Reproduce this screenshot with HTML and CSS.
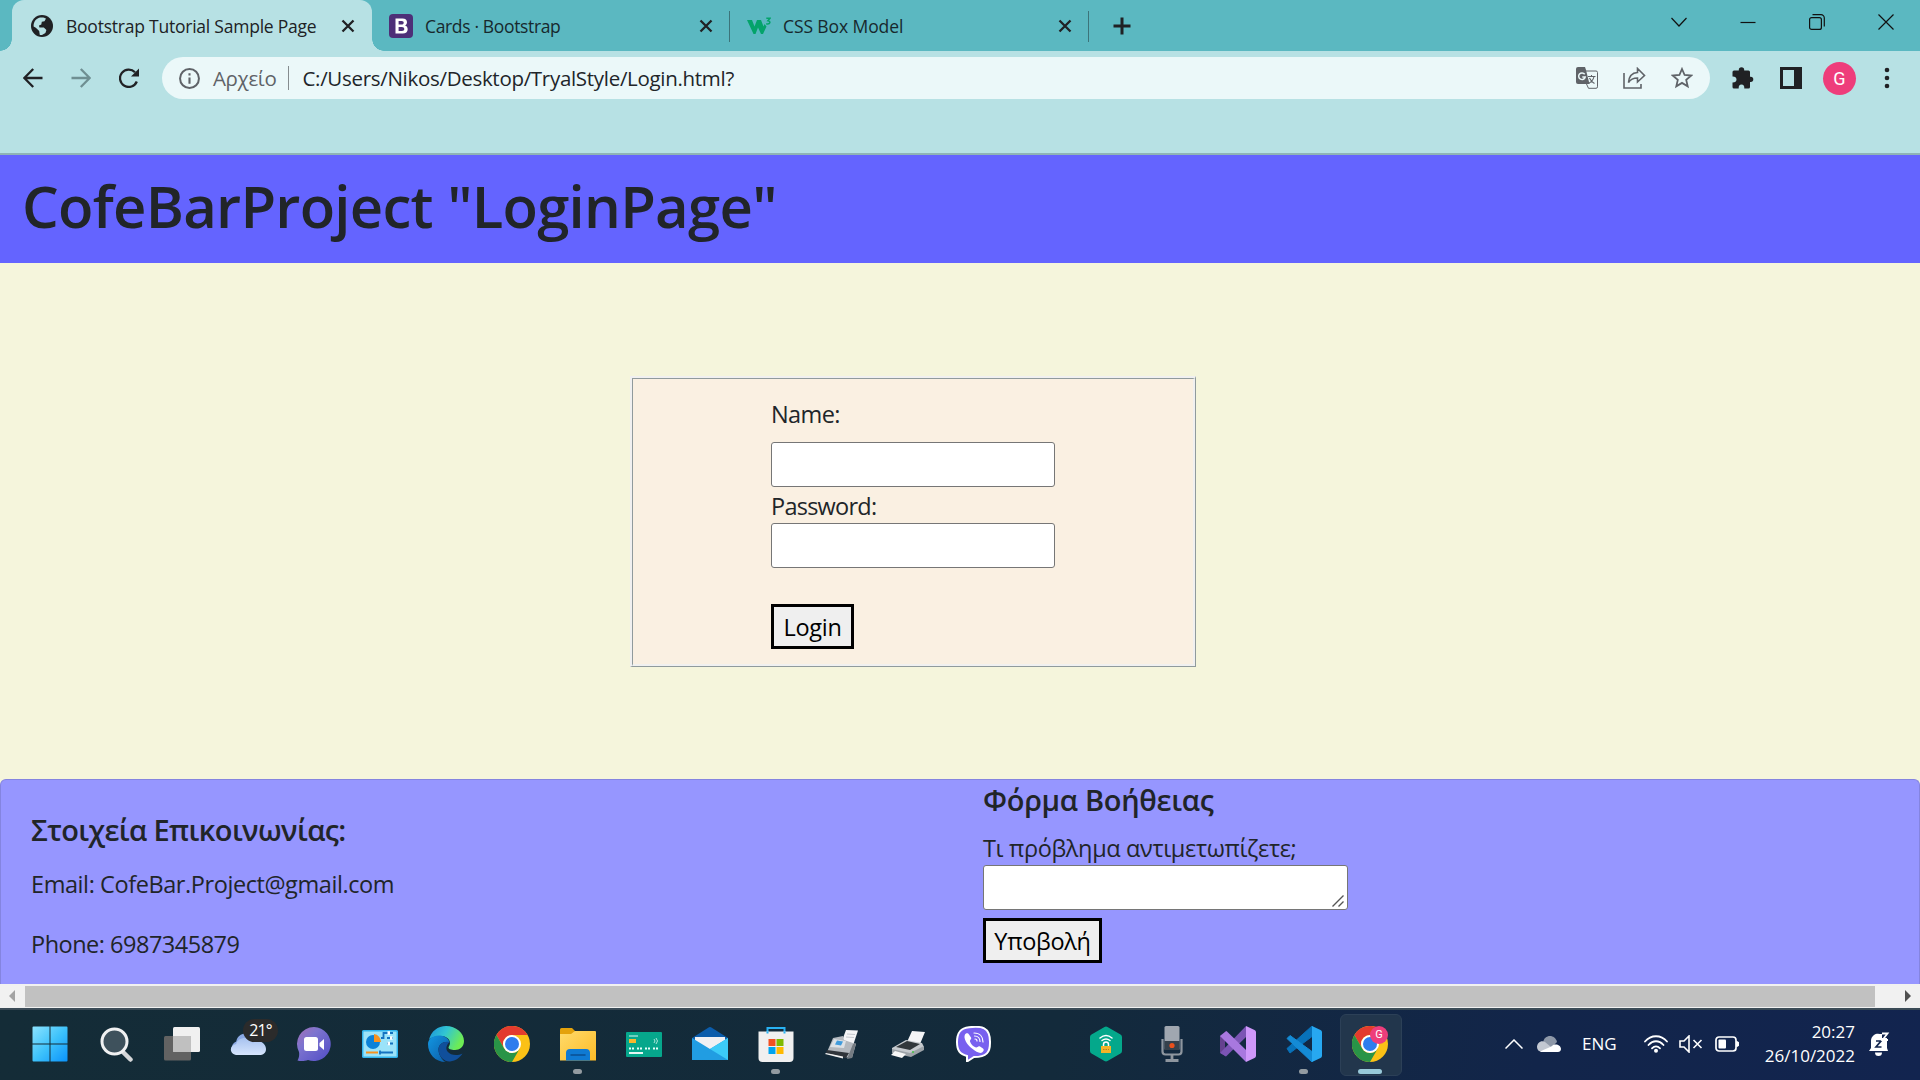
FILE: index.html
```html
<!DOCTYPE html>
<html lang="el">
<head>
<meta charset="utf-8">
<title>Bootstrap Tutorial Sample Page</title>
<link rel="stylesheet" href="styles.css">
</head>
<body>
<header class="browser">
  <div class="tabstrip">
    <div class="tab tab-active">
      <svg class="favicon" viewBox="0 0 22 22"><circle cx="11" cy="11" r="11" fill="#202124"/><path d="M9 2.600c2.500-.5 4.500 0 6 1l-1.500 2.600-2.700.6-.5 2.600-2.300 1 .4 2.200h4.400l2.600 2.500-1 3-3.400 2-2.200-.2-.6-4-3.400-3.200-2.200-1.300C2.500 7 5 3.500 9 2.600z" fill="#b7e1e4"/></svg>
      <span class="tab-title title-main">Bootstrap Tutorial Sample Page</span>
      <svg class="tab-close" viewBox="0 0 14 14"><path d="M1.500 1.500l11 11M12.500 1.500l-11 11"/></svg>
    </div>
    <div class="tab">
      <svg class="favicon wide" viewBox="0 0 24 24"><rect width="24" height="24" rx="4" fill="#4d2f78"/><path fill-rule="evenodd" fill="#fff" d="M6.500 4.500h7c3 0 4.500 1.500 4.500 3.800 0 1.600-.8 2.700-2 3.200 1.700.5 2.700 1.800 2.700 3.700 0 2.700-1.900 4.300-5 4.300h-7.200zM9.600 7v3.600h3c1.400 0 2.100-.7 2.100-1.800S14 7 12.700 7zm0 5.900V17h3.400c1.500 0 2.300-.7 2.300-2s-.9-2.100-2.400-2.100z"/></svg>
      <span class="tab-title title-cards">Cards · Bootstrap</span>
      <svg class="tab-close" viewBox="0 0 14 14"><path d="M1.500 1.500l11 11M12.500 1.500l-11 11"/></svg>
    </div>
    <div class="tab tab-last">
      <svg class="favicon wide" viewBox="0 0 24 24"><path fill="#04a36a" d="M0 6h5l2.500 6.500L10 6h4l2.500 6.500 1-2.500 2 2.500-3.500 7.500h-2L11 13.500 8.500 20h-2z"/><path d="M19.300 4.200h3.700l-2 2.500c2.900.2 2.500 4-1.800 3" fill="none" stroke="#04a36a" stroke-width="1.500"/></svg>
      <span class="tab-title title-box">CSS Box Model</span>
      <svg class="tab-close" viewBox="0 0 14 14"><path d="M1.500 1.500l11 11M12.500 1.500l-11 11"/></svg>
    </div>
    <svg class="new-tab" viewBox="0 0 18 18"><path d="M9 .5v17M.5 9h17"/></svg>
    <div class="window-buttons">
      <svg viewBox="0 0 16 16"><path d="M.5 4l7.500 8L15.500 4"/></svg>
      <svg viewBox="0 0 16 16"><path d="M.5 8.500h15"/></svg>
      <svg viewBox="0 0 16 16"><rect x=".6" y="3.600" width="11.800" height="11.800" rx="2"/><path d="M3.500.7h8.500a3.300 3.300 0 013.300 3.300v8.500"/></svg>
      <svg viewBox="0 0 16 16"><path d="M.5.5l15 15M15.500.5l-15 15"/></svg>
    </div>
  </div>
  <div class="toolbar">
    <svg class="nav-icon" viewBox="0 0 20 20"><path d="M19.500 10H2M10.200 1L1.300 10l8.900 9"/></svg>
    <svg class="nav-icon dim" viewBox="0 0 20 20"><path d="M.5 10H18M9.800 1l8.900 9-8.900 9"/></svg>
    <svg class="nav-icon" viewBox="0 0 20 20"><path d="M17.800 13.500A8.700 8.700 0 1 1 16 4.200"/><path d="M20 .5v8h-8z" fill="#202124" stroke="none"/></svg>
    <div class="omnibox">
      <svg class="info" viewBox="0 0 20 20"><circle cx="10" cy="10" r="9" fill="none" stroke="#5f6368" stroke-width="1.900"/><path d="M9 9h2v6H9zM9 5h2v2.200H9z" fill="#5f6368"/></svg>
      <span class="scheme">Αρχείο</span>
      <span class="url">C:/Users/Nikos/Desktop/TryalStyle/Login.html?</span>
      <div class="omni-actions">
        <svg viewBox="0 0 22 22"><path d="M2 0h7l1 3 3.500 14H2a2 2 0 01-2-2V2a2 2 0 012-2z" fill="#5f6368"/><path d="M10 4h10a1.500 1.500 0 011.500 1.500v14.300a1.500 1.500 0 01-1.500 1.500H12.500L10.500 17" fill="none" stroke="#5f6368"/><path d="M8.700 7.300A3.300 3.300 0 1 0 9.200 10H6.300" fill="none" stroke="#ebf8f9" stroke-width="1.500"/><path d="M12 9.500h7.500M15.500 8v1.500M18 9.500c-.6 3-2.800 5.500-5.500 7M13.500 11c1 2.200 3 4.500 5 5.500" fill="none" stroke="#5f6368" stroke-width="1.100"/></svg>
        <svg class="share" viewBox="0 0 23 22"><path d="M1 6v15h17v-4M5.500 15.500C6 9 9.500 5.800 14.500 5.500v-4L21.500 8.500l-7 6.500v-4c-4 0-7 1.300-9 4.500z" fill="none" stroke="#5f6368" stroke-width="1.600"/></svg>
        <svg viewBox="0 0 22 22"><path d="M11 2l2.600 6 6.500.6-4.900 4.300 1.500 6.400L11 15.900l-5.700 3.400 1.500-6.400L1.900 8.600 8.400 8z" fill="none" stroke="#5f6368" stroke-width="1.800"/></svg>
      </div>
    </div>
    <svg class="ext" viewBox="0 0 22 22"><path fill="#202124" d="M2 3.500h4.800V3a2.700 2.700 0 015.400 0v.5h4.300A1.500 1.500 0 0118 5v4.700h.7a2.600 2.600 0 010 5.200H18V20a1.500 1.500 0 01-1.500 1.500h-4.200c.2-2.600-.8-4-2.800-4s-3 1.400-2.800 4H2A1.500 1.500 0 01.5 20v-4.600c2.500.1 4-.9 4-2.900s-1.500-3-4-2.900V5A1.500 1.500 0 012 3.500z"/></svg>
    <svg class="panel" viewBox="0 0 22 22"><path fill="#202124" fill-rule="evenodd" d="M0 0h22v22H0zM3 3v16h11V3z"/></svg>
    <div class="avatar">G</div>
    <svg class="menu" viewBox="0 0 6 22"><circle cx="3" cy="3" r="2.300"/><circle cx="3" cy="11" r="2.300"/><circle cx="3" cy="19" r="2.300"/></svg>
  </div>
</header>
<main class="page">
  <h1 class="banner">CofeBarProject "LoginPage"</h1>
  <section class="login-area">
    <div class="fieldset"><form class="login-form">
      <label class="name-label" for="name">Name:</label>
      <input id="name" class="field" type="text">
      <label class="pass-label" for="pass">Password:</label>
      <input id="pass" class="field" type="password">
      <button class="btn btn-login" type="button">Login</button>
    </form></div>
  </section>
  <footer class="card">
    <div class="contact">
      <h5>Στοιχεία Επικοινωνίας:</h5>
      <p class="email">Email: CofeBar.Project@gmail.com</p>
      <p class="phone">Phone: 6987345879</p>
    </div>
    <form class="help">
      <h5>Φόρμα Βοήθειας</h5>
      <label class="help-label" for="problem">Τι πρόβλημα αντιμετωπίζετε;</label>
      <div class="problem-box">
        <textarea id="problem" class="problem"></textarea>
        <svg class="grip" viewBox="0 0 12 12"><path d="M.5 11.500l11-11M6.500 11.500l5-5" stroke="#555" stroke-width="1.400"/></svg>
      </div>
      <button class="btn btn-send" type="button">Υποβολή</button>
    </form>
  </footer>
  <div class="scrollbar">
    <svg class="arrow" viewBox="0 0 6 12"><path d="M6 0v12L0 6z" fill="#a3a3a3"/></svg>
    <div class="thumb"></div>
    <svg class="arrow" viewBox="0 0 6 12"><path d="M0 0v12l6-6z" fill="#505050"/></svg>
  </div>
</main>
<nav class="taskbar">
  <div class="apps">
    <div class="app"><svg viewBox="0 0 36 36"><defs><linearGradient id="win" x1="0" y1="0" x2="1" y2="1"><stop offset="0" stop-color="#8ce3ff"/><stop offset=".5" stop-color="#3fc3fb"/><stop offset="1" stop-color="#0a93fb"/></linearGradient></defs><path fill="url(#win)" d="M1.500.5h16v17h-17v-16a1 1 0 011-1zM18.500.5h16a1 1 0 011 1v16h-17zM.5 18.500h17v17h-16a1 1 0 01-1-1zM18.500 18.500h17v16a1 1 0 01-1 1h-16z"/></svg></div>
    <div class="app"><svg viewBox="0 0 36 36"><path d="M24 25l8.500 8.500" stroke="#d5d7d9" stroke-width="4.500" stroke-linecap="round"/><circle cx="16.500" cy="15.500" r="12.500" fill="#3e515c" stroke="#f0f1f2" stroke-width="3"/></svg></div>
    <div class="app"><svg viewBox="0 0 36 36"><rect x="0" y="10" width="27" height="24.500" rx="1.500" fill="#626262"/><rect x="9" y="1" width="27" height="25" rx="1.500" fill="#f0f0f0"/><path d="M9 10h18v16H10.500A1.500 1.500 0 019 24.500z" fill="#c0c0c0"/></svg></div>
    <div class="app"><svg viewBox="0 0 36 36"><defs><linearGradient id="cl" x1="0" y1="0" x2="0" y2="1"><stop offset="0" stop-color="#a7c2ef"/><stop offset="1" stop-color="#d6e5fd"/></linearGradient></defs><path fill="#8ba9e4" d="M7 29a7.200 7.200 0 01-.8-13.500C7.500 8.500 14 6.500 18 8.500s6 5 6 8z"/><path fill="url(#cl)" d="M6.500 29C-1 28-1 19 6.200 18c1-6.500 13-8.500 16.500-1.500C29 13 36 17 36 23c0 4-3 6-6.500 6z"/></svg><span class="weather">21°</span></div>
    <div class="app"><svg viewBox="0 0 36 36"><defs><linearGradient id="chat" x1="0" y1="0" x2="1" y2="1"><stop offset="0" stop-color="#a56fb5"/><stop offset=".35" stop-color="#7d74cf"/><stop offset="1" stop-color="#504cc6"/></linearGradient></defs><path d="M18 1a17 17 0 11-6 33c-3 1-7 1.500-10.500.5C3 32 3.500 29 3 26A17 17 0 0118 1z" fill="url(#chat)"/><rect x="8" y="11" width="14" height="14" rx="2.500" fill="#fff"/><path fill="#fff" d="M23.500 17l4.500-4v11l-4.500-4z"/></svg></div>
    <div class="app"><svg viewBox="0 0 36 36"><rect x=".7" y="4.700" width="34.600" height="26.600" rx="1" fill="#9be3f9" stroke="#2fb4ee" stroke-width="1.500"/><circle cx="11" cy="16" r="7" fill="#0b82d8"/><path d="M12 8v8h7a8 8 0 00-7-8z" fill="#f7921e"/><path d="M19 12h2.500V7H25M25 7h6M25 12h6M25 17.500h6" stroke="#1473c1" stroke-width="1.800" fill="none"/><path d="M25.500 5.200h2.500v3.500h-2.500zM28 10.200h2.500v3.500H28zM25.500 15.700h2.500v3.500h-2.500z" fill="#fff"/><path d="M4 22.500h12" stroke="#f7921e" stroke-width="0"/><path d="M4 26.500h12" stroke="#f7921e" stroke-width="2"/><path d="M17 26.500h14M18 24.500v4" stroke="#1473c1" stroke-width="1.800"/></svg></div>
    <div class="app"><svg viewBox="0 0 36 36"><defs><linearGradient id="ed" x1="0" y1="0" x2="1" y2=".4"><stop offset="0" stop-color="#198fdc"/><stop offset=".5" stop-color="#32c6d2"/><stop offset="1" stop-color="#6dec55"/></linearGradient><linearGradient id="ed2" x1="0" y1="0" x2="1" y2="1"><stop offset="0" stop-color="#1297e2"/><stop offset="1" stop-color="#0c59a4"/></linearGradient></defs><path d="M1 14C3 5 10 0 18 0c10 0 18 7 18 15 0 6-4.500 9-9 9-4 0-6.500-1-6.500-2.500 0-1 1.500-2 1.500-4.500 0-4-4-7-9-7-6 0-10.500 2-12 4z" fill="url(#ed)"/><path d="M0 18C0 13 5 9 12 9.500c5 .3 9 3.500 9.500 7-6-2-11 2-11 7C10.500 30 16 36 18 36 7 36 0 28 0 18z" fill="url(#ed2)"/><path d="M21.500 16c-6-1.500-11 2.500-11 7.500C10.500 31 17 36 22 35.500c6-.7 10-4 12.500-8-5 2.500-12 2-15-2-2.500-3.500-.5-7 2-9.500z" fill="#104f9b"/></svg></div>
    <div class="app"><svg viewBox="0 0 36 36"><g id="chrome"><circle cx="18" cy="18" r="18" fill="#fbc116"/><path d="M2.400 9A18 18 0 0133.600 9H18a9 9 0 00-7.800 13.500z" fill="#e33b2e"/><path d="M2.400 9l7.800 13.500A9 9 0 0025.800 22.500L18 36A18 18 0 012.400 9z" fill="#299447"/><circle cx="18" cy="18" r="9" fill="#fff"/><circle cx="18" cy="18" r="7" fill="#2f7ded"/></g></svg></div>
    <div class="app running"><svg viewBox="0 0 36 36"><defs><linearGradient id="fo" x1="0" y1="0" x2="1" y2="1"><stop offset="0" stop-color="#ffdb6b"/><stop offset="1" stop-color="#fdbb27"/></linearGradient></defs><path d="M0 3.500A1.500 1.500 0 011.500 2H12l4 4v5H0z" fill="#e4a20c"/><path d="M0 8h11l4-3h20a1 1 0 011 1v28.500H0z" fill="url(#fo)"/><path d="M6 34.500V27a4 4 0 014-4h16a4 4 0 014 4v7.500z" fill="#0f7ad3"/><path d="M11 29h14" stroke="#0a4f92" stroke-width="1.500" stroke-linecap="round"/></svg></div>
    <div class="app"><svg viewBox="0 0 36 36"><rect y="6" width="36" height="25" rx="1" fill="#06a78c"/><path d="M3 10h9" stroke="#6fd0c0" stroke-width="2"/><rect x="3" y="13" width="7" height="4" fill="#f7b82d"/><path d="M28 13q2 2 0 4M30 12q3 3 0 6" stroke="#aee6da" fill="none"/><path d="M3 22.500h30" stroke="#e6fffa" stroke-width="2" stroke-dasharray="2 1 2 3"/><path d="M3 27h14" stroke="#fff" stroke-width="1.800"/></svg></div>
    <div class="app"><svg viewBox="0 0 36 36"><path d="M0 12L17 1.300a2 2 0 012 0L36 12v6H0z" fill="#0b5cab"/><path d="M3 11h30v10L18 26 3 21z" fill="#f0f0f3"/><path d="M0 12l18 11L36 12v22H0z" fill="#219de2"/><path d="M36 12L18 23l18 11z" fill="#3ccbf8"/></svg></div>
    <div class="app running"><svg viewBox="0 0 36 36"><path d="M9.500 8V2h17v6" fill="none" stroke="#28b2f3" stroke-width="2"/><path d="M.5 5.500h35V32a4 4 0 01-4 4h-27a4 4 0 01-4-4z" fill="#f0f0f0"/><path d="M9.500 5.500v2M26.500 5.500v2" stroke="#28b2f3" stroke-width="2"/><path d="M10.500 13h7v7h-7z" fill="#f25022"/><path d="M18.500 13h7v7h-7z" fill="#7fba00"/><path d="M10.500 21h7v7h-7z" fill="#00a4ef"/><path d="M18.500 21h7v7h-7z" fill="#ffb900"/></svg></div>
    <div class="app"><svg viewBox="0 0 36 36"><path d="M22 4l12 .5-5 15-12-2z" fill="#f4f5f7"/><path d="M23 8l8 .5M22 11l8 .5" stroke="#c4c8ce"/><path d="M9 12l10-2 1 4 12 4-4 14-18-2-7-4z" fill="#b3b8be"/><path d="M10 13l12 2-2 7-14-1z" fill="#dce1e6"/><path d="M13 14.500l6 1-2 4-6-1z" fill="#3f9bdc"/><path d="M3 24l22 3-3 5L2 27z" fill="#30353b"/><path d="M29 18l3-1-4 15-5 1z" fill="#747b82"/><path d="M2 27l17 3.500v2L1 28z" fill="#f2f2f2"/></svg></div>
    <div class="app"><svg viewBox="0 0 36 36"><path d="M22 5l13 1-5 12-13-2z" fill="#f4f5f7"/><path d="M2 22l14-8 16 3 2 4-13 8-19-4z" fill="#c6cace"/><path d="M6 21l11-6 13 3-10 6z" fill="#31373b"/><path d="M2 23l18 4 14-7v4l-13 7L2 27z" fill="#9da3a8"/><path d="M5 25l11 3-4 4-11-3z" fill="#f7f7f7"/><circle cx="23" cy="26" r="1" fill="#45c245"/></svg></div>
    <div class="app"><svg viewBox="0 0 36 36"><path d="M13 1.200C25 0 34.500 0 34 17c0 9-3 14-16 14l-7 4.500V30C4 28 1 25 1 16 1 7 4 2 13 1.200z" fill="#7860ef" stroke="#fff" stroke-width="2"/><path d="M9 8.500c1-1.500 3-2 4 0l2 3c1 1.500-1.500 2.500-1 4 1 3 3 5 6 6 1.500.3 2-2 4-1l3 2c1.500 1 .5 3-1 4-2 1.300-6-.5-10-4C11 19 7 12 9 8.500z" fill="#fff"/><path d="M18 7c6 0 9 4 9 9M18.500 10c3.500 0 5.500 2.500 5.500 5.500M19 13c1.500 0 2 .8 2 2" stroke="#fff" stroke-width="1.200" fill="none" stroke-linecap="round"/></svg></div>
    <div class="app after-gap"><svg viewBox="0 0 36 36"><path d="M16.500 1a3 3 0 013 0L32.500 8.500A3 3 0 0134 11v14a3 3 0 01-1.500 2.600L19.500 35a3 3 0 01-3 0l-13-7.400A3 3 0 012 25V11a3 3 0 011.500-2.500z" fill="#04a88b"/><path d="M12 12q6-5 12 0M14 14.500q4-3 8 0" stroke="#fff" stroke-width="1.500" fill="none" stroke-linecap="round"/><path d="M15.500 21v-2.500a2.500 2.500 0 015 0V21" stroke="#fff" stroke-width="1.500" fill="none"/><rect x="13" y="20" width="10" height="7" fill="#f5b428"/><path d="M15 23.500h6" stroke="#b8811a" stroke-dasharray="1.500 1"/></svg></div>
    <div class="app"><svg viewBox="0 0 36 36"><rect x="10.500" y="0" width="15" height="24" rx="1.500" fill="#a0a7b0"/><path d="M10.500 15h15v9h-15z" fill="#35414c"/><path d="M8.500 13v12.500a3 3 0 003 3h13a3 3 0 003-3V13" fill="none" stroke="#8e969f" stroke-width="2.200"/><path d="M18 28v6M11.500 34.500h13" stroke="#8e969f" stroke-width="2.800"/><circle cx="18" cy="19.500" r="2.600" fill="#e9501c"/></svg></div>
    <div class="app"><svg viewBox="0 0 36 36"><path d="M0 10l6-5v7l-1 1v11l1 6.500-6-4z" fill="#65418f"/><path d="M0 27L26 0v11L6 30.500z" fill="#7b54b4"/><path d="M0 10l6.500-5L26 24v12z" fill="#a878df"/><path d="M26 0l8.500 4A2.500 2.500 0 0136 6v24a2.500 2.500 0 01-1.500 2L26 36z" fill="#cf98fa"/></svg></div>
    <div class="app running"><svg viewBox="0 0 36 36"><path d="M1 22.500L26 0v10.500L4 27z" stroke="#0872ba" stroke-linejoin="round" fill="#0872ba"/><path d="M1 12.500L4 9.500 26 25.500V36z" stroke="#148bd6" stroke-linejoin="round" fill="#148bd6"/><path d="M26 0l8.500 4A2.500 2.500 0 0136 6v24a2.500 2.500 0 01-1.500 2L26 36z" fill="#27a8f1"/></svg></div>
    <div class="app focused"><svg viewBox="0 0 36 36"><use href="#chrome"/></svg><span class="badge">G</span></div>
  </div>
  <div class="tray">
    <svg class="chev" viewBox="0 0 18 10"><path d="M.5 9.500L9 1l8.500 8.500" fill="none" stroke="#fff" stroke-width="1.500"/></svg>
    <svg class="cloud" viewBox="0 0 24 16"><path d="M6 8C6 2 10 0 13 0s6 2 7 6l-6 6z" fill="#8e98a8"/><path d="M5 16A5 5 0 010 11c0-4 4-7 8-5l12 10z" fill="#c3c8d2"/><path d="M3 16c2-2 9-4 12-6 3-3 9-1 9 3 0 2-1.500 3-3 3z" fill="#fff"/></svg>
    <span class="lang">ENG</span>
    <svg class="wifi" viewBox="0 0 24 18"><g fill="none" stroke="#fff" stroke-width="1.800" stroke-linecap="round"><path d="M1 6.500c6-7 16-7 22 0M4.500 10c4.500-5 10.500-5 15 0M8 13.300c2.500-2.600 5.500-2.600 8 0"/></g><circle cx="12" cy="15.800" r="2" fill="#fff"/></svg>
    <svg class="vol" viewBox="0 0 24 18"><path d="M1 6h4l5-5v16l-5-5H1zM14.500 5l8 8M22.500 5l-8 8" fill="none" stroke="#fff" stroke-width="1.600"/></svg>
    <svg class="batt" viewBox="0 0 24 16"><rect x="1" y="1" width="20" height="14" rx="3" fill="none" stroke="#fff" stroke-width="1.700"/><rect x="3.500" y="3.500" width="7.500" height="9" rx="1" fill="#fff"/><path d="M21.500 5.500a2.500 2.500 0 010 5z" fill="#fff" stroke="#fff"/></svg>
    <div class="clock"><span>20:27</span><span>26/10/2022</span></div>
    <svg class="bell" viewBox="0 0 22 24"><path d="M1 19l2-3V9a7 7 0 019-7h2v4h5v10l1 3zM7 20.500h7a3.500 3.500 0 01-7 0z" fill="#fff"/><path d="M8 9h5l-5 6h5.500" fill="none" stroke="#13264e" stroke-width="1.700"/><path d="M14 1.500h5.500L14.500 8H20" fill="none" stroke="#fff" stroke-width="1.800"/></svg>
  </div>
</nav>
</body>
</html>
```
FILE: styles.css
```css
* { box-sizing: border-box; }
body { margin: 0; width: 1920px; height: 1080px; overflow: hidden; font-family: "Open Sans", "Noto Sans", sans-serif; color: #212529; display: flex; flex-direction: column; }
svg { display: block; flex: none; }
h1, h5, p { margin: 0; font-weight: 600; white-space: nowrap; }
.browser { height: 155px; flex: none; background: #b7e1e4; border-bottom: 2px solid #8fb3b6; }
.tabstrip { height: 51px; background: #5bb8c1; display: flex; align-items: center; padding-left: 12px; }
.tab { width: 359px; height: 51px; padding: 0 18px 0 17px; display: flex; align-items: center; position: relative; font-size: 17.500px; line-height: 26px; color: #17292d; }
.tab-title { white-space: nowrap; margin-left: 12px; }
.title-main { margin-left: 13px; letter-spacing: -.23px; }
.title-cards { letter-spacing: -.35px; }
.title-box { letter-spacing: -.1px; }
.tab-active { width: 360px; background: #b7e1e4; border-radius: 12px 12px 0 0; padding: 0 17px 0 19px; color: #202124; }
.tab-active::before, .tab-active::after { content: ""; position: absolute; bottom: 0; width: 12px; height: 12px; }
.tab-active::before { left: -12px; background: radial-gradient(circle at 0 0, #5bb8c1 11.500px, #b7e1e4 12px); }
.tab-active::after { right: -12px; background: radial-gradient(circle at 100% 0, #5bb8c1 11.500px, #b7e1e4 12px); }
.tab:not(.tab-active)::after { content: ""; position: absolute; right: 1px; top: 11px; width: 1px; height: 31px; background: #3c747a; }
.tab-last { padding-left: 16px; }
.favicon { width: 22px; height: 22px; }
.favicon.wide { width: 24px; height: 24px; }
.tab-close { width: 14px; height: 14px; margin-left: auto; stroke: #202124; stroke-width: 2.300; }
.new-tab { width: 18px; height: 18px; margin-left: 23px; stroke: #202124; stroke-width: 3; }
.window-buttons { margin: 0 26px 8px auto; display: flex; gap: 53px; }
.window-buttons svg { width: 16px; height: 16px; fill: none; stroke: #111; stroke-width: 1.200; }
.toolbar { height: 54px; display: flex; align-items: center; padding-left: 23px; }
.nav-icon { width: 20px; height: 20px; margin-right: 28px; fill: none; stroke: #202124; stroke-width: 2.300; }
.nav-icon.dim { stroke: #6f8f92; }
.omnibox { width: 1548px; height: 42px; border-radius: 21px; background: #ebf8f9; display: flex; align-items: center; padding: 0 17px; font-size: 20.500px; line-height: 30px; margin-left: -5px; }
.info { width: 21px; height: 21px; }
.scheme { color: #5f6368; margin-left: 13px; padding-right: 12px; letter-spacing: -.35px; }
.url { border-left: 1px solid #858c8f; padding-left: 13px; line-height: 24px; white-space: nowrap; letter-spacing: -.3px; }
.omni-actions { margin-left: auto; display: flex; gap: 25px; }
.omni-actions svg { width: 22px; height: 22px; }
.omni-actions .share { width: 23px; }
.ext { width: 22px; height: 22px; margin-left: 22px; }
.panel { width: 22px; height: 22px; margin-left: 26px; }
.avatar { width: 33px; height: 33px; border-radius: 50%; background: #ee3d7b; color: #fff; font: 18px/33px Roboto, sans-serif; text-align: center; margin-left: 21px; }
.menu { width: 6px; height: 22px; margin-left: 28px; fill: #202124; }
.banner { height: 108px; background: #6464ff; font-size: 58px; line-height: 101px; padding-left: 22px; letter-spacing: -.72px; }
.login-area { height: 516px; background: #f5f5dc; padding: 113px 0 0 630px; }
.fieldset { width: 566px; height: 291px; border: 2px solid #f0f0f0; border-right: 1px solid #909a9c; border-bottom: 1px solid #909a9c; }
.login-form { height: 100%; background: #faf0e2; border: 1px solid #909a9c; border-right: 2px solid #f0f0f0; border-bottom: 2px solid #f0f0f0; padding: 17px 0 0 138px; display: flex; flex-direction: column; align-items: flex-start; font-size: 23.500px; line-height: 36px; }
.name-label { margin-bottom: 10px; letter-spacing: -.6px; }
.pass-label { height: 36px; line-height: 38px; letter-spacing: -.75px; }
.field { width: 284px; height: 45px; border: 1px solid #767676; border-radius: 3px; background: #fff; outline: none; }
.btn { font: 23.500px/36px "Open Sans", sans-serif; height: 45px; padding: 0; border: 3px solid #000; background: #efefef; color: #000; text-align: center; letter-spacing: -.3px; }
.btn-login { width: 83px; margin-top: 36px; }
.card { height: 205px; background: #9696ff; border: 1px solid #8484e0; border-bottom: 0; border-radius: 6px 6px 0 0; display: grid; grid-template-columns: 982px 1fr; font-size: 23.500px; line-height: 36px; }
.page { background: #f5f5dc; }
.contact { padding: 32px 0 0 30px; }
.contact h5 { font-size: 29px; line-height: 36px; margin-bottom: 18px; letter-spacing: -.62px; }
.contact p { font-weight: 400; height: 36px; margin-bottom: 24px; letter-spacing: -.42px; }
.contact .phone { letter-spacing: -.5px; }
.help { display: flex; flex-direction: column; align-items: flex-start; }
.help h5 { font-size: 29px; line-height: 36px; margin: 2px 0 11px; letter-spacing: -.3px; }
.help-label { height: 36px; line-height: 38px; letter-spacing: -.35px; }
.problem-box { position: relative; }
.problem { width: 365px; height: 45px; border: 1px solid #767676; border-radius: 3px; resize: none; display: block; margin: 0; }
.grip { position: absolute; right: 4px; bottom: 3px; width: 12px; height: 12px; }
.btn-send { width: 119px; margin-top: 8px; }
.scrollbar { height: 24px; background: #f1f1f1; display: flex; align-items: center; padding: 0 9px; }
.thumb { width: 1850px; height: 21px; background: #c1c1c1; margin: 0 30px 0 10px; }
.arrow { width: 6px; height: 12px; }
.taskbar { height: 72px; border-top: 2px solid #3b4b57; background: linear-gradient(100deg, #142c37 0%, #132a3b 55%, #12254a 80%, #12244f 100%); display: flex; align-items: flex-start; color: #fff; }
.apps { display: flex; padding-left: 17px; }
.app { width: 66px; height: 66px; display: flex; align-items: center; justify-content: center; position: relative; padding-top: 2px; }
.app svg { width: 36px; height: 36px; }
.after-gap { margin-left: 66px; }
.running::after { content: ""; position: absolute; left: 28px; bottom: 2px; width: 9px; height: 5px; border-radius: 3px; background: #939ba1; }
.focused::before { content: ""; position: absolute; left: 3px; top: 4px; width: 60px; height: 60px; border-radius: 6px; background: #22364c; border: 1px solid #2c4057; }
.focused svg { position: relative; }
.focused::after { content: ""; position: absolute; left: 21px; bottom: 2px; width: 24px; height: 5px; border-radius: 3px; background: #98c9d9; }
.badge { position: absolute; left: 33px; top: 16px; width: 18px; height: 18px; border-radius: 50%; background: #ee3d7b; font: 11px/18px Roboto, sans-serif; text-align: center; }
.weather { position: absolute; left: 28px; top: 9px; width: 35px; height: 23px; border-radius: 12px; background: #2b2b2b; font-size: 16px; line-height: 22px; text-align: center; letter-spacing: -.8px; }
.tray { margin-left: auto; height: 68px; display: flex; align-items: center; padding-right: 30px; font-size: 17px; line-height: 24px; }
.chev { width: 18px; height: 10px; }
.cloud { width: 24px; height: 16px; margin: 0 21px 0 14px; }
.lang { width: 35px; }
.wifi { width: 24px; height: 18px; margin-left: 27px; }
.vol { width: 24px; height: 18px; margin-left: 11px; }
.batt { width: 24px; height: 16px; margin-left: 12px; }
.clock { width: 91px; margin: 0 13px 0 25px; display: flex; flex-direction: column; align-items: flex-end; }
.bell { width: 22px; height: 24px; }
```
